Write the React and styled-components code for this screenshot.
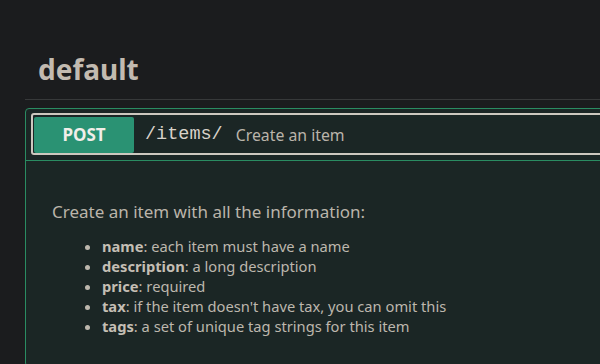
import React from "react"
import styled, { createGlobalStyle } from "styled-components"

const GlobalStyle = createGlobalStyle`
  html, body {
    margin: 0;
    background: #1b1c1e;
    overflow: hidden;
  }
  body {
    font-family: "Noto Sans", "Open Sans", sans-serif;
    color: #b8b2a8;
  }
`

const Page = styled.div`
  padding-left: 25px;
  width: calc(100% + 30px);
  box-sizing: border-box;
`

const TagHeader = styled.h3`
  margin: 0;
  padding: 49px 0 9px 13px;
  font-size: 28px;
  font-weight: 700;
  line-height: 41px;
  color: #c2bab0;
  border-bottom: 1px solid #37393a;
`

const OpBlock = styled.div`
  margin-top: 8px;
  border: 1px solid #2a8c62;
  border-radius: 4px;
  background: #1b2625;
`

const Summary = styled.div`
  padding: 4px 5px 5px 5px;
  border-bottom: 1px solid #2a8c62;
`

const SummaryBox = styled.div`
  display: flex;
  align-items: center;
  height: 37px;
  padding: 1px 0 0 1px;
  border: 2px solid #cdc8bf;
  border-radius: 3px;
`

const Method = styled.span`
  display: flex;
  align-items: center;
  justify-content: center;
  width: 100px;
  height: 36px;
  background: #2a9273;
  border-radius: 2px;
  color: #f1eee9;
  font-size: 17px;
  font-weight: 700;
`

const Path = styled.span`
  margin-left: 11px;
  font-family: "Liberation Mono", "DejaVu Sans Mono", monospace;
  font-size: 18.5px;
  color: #d8d2ca;
`

const SummaryText = styled.span`
  margin-left: 13px;
  font-size: 15.8px;
  color: #bab4aa;
`

const Body = styled.div`
  padding: 39px 0 30px 26px;
`

const Lead = styled.p`
  margin: 0 0 12px;
  font-size: 17px;
  line-height: 24px;
  color: #bab4aa;
`

const Fields = styled.ul`
  margin: 0;
  padding-left: 50px;
  font-size: 14.7px;
  line-height: 20px;
  color: #bdb7ad;

  b {
    font-weight: 700;
    color: #c4beb4;
  }
`

const fields = [
  ["name", "each item must have a name"],
  ["description", "a long description"],
  ["price", "required"],
  ["tax", "if the item doesn't have tax, you can omit this"],
  ["tags", "a set of unique tag strings for this item"],
]

export default function App() {
  return (
    <Page>
      <GlobalStyle />
      <TagHeader>default</TagHeader>
      <OpBlock>
        <Summary>
          <SummaryBox>
            <Method>POST</Method>
            <Path>/items/</Path>
            <SummaryText>Create an item</SummaryText>
          </SummaryBox>
        </Summary>
        <Body>
          <Lead>Create an item with all the information:</Lead>
          <Fields>
            {fields.map(([name, text]) => (
              <li key={name}>
                <b>{name}</b>: {text}
              </li>
            ))}
          </Fields>
        </Body>
      </OpBlock>
    </Page>
  )
}
